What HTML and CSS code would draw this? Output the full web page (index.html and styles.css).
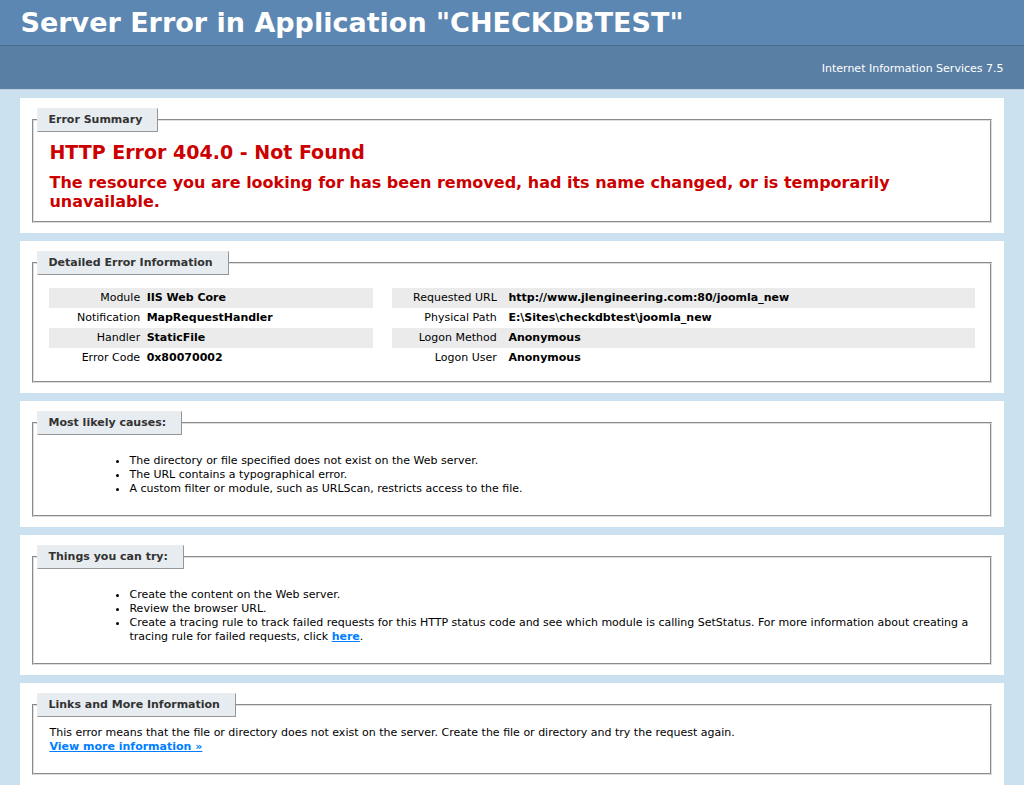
FILE: index.html
```html
<!DOCTYPE html>
<html>
<head>
<meta charset="utf-8">
<title>IIS 7.5 Detailed Error - 404.0 - Not Found</title>
<link rel="stylesheet" href="styles.css">
</head>
<body class="page">
<div class="header"><h1 class="title">Server Error in Application "CHECKDBTEST"</h1></div>
<div class="server-version"><p class="server-version-text">Internet Information Services 7.5</p></div>
<div class="content">
  <div class="content-container">
    <fieldset class="box"><legend class="box-legend">Error Summary</legend>
      <h2 class="err-title">HTTP Error 404.0 - Not Found</h2>
      <h3 class="err-sub">The resource you are looking for has been removed, had its name changed, or is temporarily unavailable.</h3>
    </fieldset>
  </div>
  <div class="content-container">
    <fieldset class="box"><legend class="box-legend">Detailed Error Information</legend>
      <div class="details-left">
        <table class="details" cellpadding="0" cellspacing="0">
          <tr class="alt"><th>Module</th><td>IIS Web Core</td></tr>
          <tr><th>Notification</th><td>MapRequestHandler</td></tr>
          <tr class="alt"><th>Handler</th><td>StaticFile</td></tr>
          <tr><th>Error Code</th><td>0x80070002</td></tr>
        </table>
      </div>
      <div class="details-right">
        <table class="details" cellpadding="0" cellspacing="0">
          <tr class="alt"><th>Requested URL</th><td>http://www.jlengineering.com:80/joomla_new</td></tr>
          <tr><th>Physical Path</th><td>E:\Sites\checkdbtest\joomla_new</td></tr>
          <tr class="alt"><th>Logon Method</th><td>Anonymous</td></tr>
          <tr><th>Logon User</th><td>Anonymous</td></tr>
        </table>
      </div>
      <div class="clear"></div>
    </fieldset>
  </div>
  <div class="content-container">
    <fieldset class="box"><legend class="box-legend">Most likely causes:</legend>
      <ul class="list">
        <li>The directory or file specified does not exist on the Web server.</li>
        <li>The URL contains a typographical error.</li>
        <li>A custom filter or module, such as URLScan, restricts access to the file.</li>
      </ul>
    </fieldset>
  </div>
  <div class="content-container">
    <fieldset class="box"><legend class="box-legend">Things you can try:</legend>
      <ul class="list">
        <li>Create the content on the Web server.</li>
        <li>Review the browser URL.</li>
        <li>Create a tracing rule to track failed requests for this HTTP status code and see which module is calling SetStatus. For more information about creating a tracing rule for failed requests, click <a class="link" href="#">here</a>. </li>
      </ul>
    </fieldset>
  </div>
  <div class="content-container">
    <fieldset class="box"><legend class="box-legend">Links and More Information</legend>
      This error means that the file or directory does not exist on the server. Create the file or directory and try the request again.
      <p class="para"><a class="link" href="#">View more information &raquo;</a></p>
    </fieldset>
  </div>
</div>
</body>
</html>
```

FILE: styles.css
```css
.page {
  margin: 0;
  font-size: 11px;
  line-height: 14px;
  font-family: "DejaVu Sans", Verdana, sans-serif;
  background: #CBE1EF;
}
.header {
  width: 96%;
  margin: 0;
  padding: 6px 2% 6px 2%;
  font-family: "DejaVu Sans", sans-serif;
  color: #FFF;
  background-color: #5C87B2;
}
.title {
  font-size: 27px;
  line-height: 33px;
  margin: 0;
  color: #FFF;
}
.server-version {
  width: 96%;
  min-height: 1px;
  margin: 0 0 5px 0;
  padding: 11px 2% 8px 2%;
  color: #FFF;
  background-color: #5A7FA5;
  border-bottom: 1px solid #C1CFDD;
  border-top: 1px solid #4A6C8E;
  font-weight: normal;
  font-size: 11px;
  text-align: right;
}
.server-version-text { margin: 5px 0; }
.content {
  margin: 0 0 0 2%;
  position: relative;
}
.content-container {
  background: #FFF;
  width: 96%;
  margin-top: 8px;
  padding: 10px;
  position: relative;
}
.box {
  margin: 0 2px;
  border: 2px groove #dedede;
  padding: 0 15px 9px 15px;
}
.box-legend {
  color: #333333;
  padding: 4px 15px 4px 10px;
  margin: 0 0 9px -12px;
  border-top: 1px solid #EDEDED;
  border-left: 1px solid #EDEDED;
  border-right: 1px solid #969696;
  border-bottom: 1px solid #969696;
  background: #E7ECF0;
  font-weight: bold;
  font-size: 11px;
  line-height: 14px;
}
.err-title {
  font-size: 19px;
  line-height: 22px;
  margin: 0;
  color: #CC0000;
}
.err-sub {
  font-size: 16px;
  line-height: 19px;
  margin: 10px 0 1px 0;
  color: #CC0000;
}
.list { margin: 10px 0 10px 40px; }
.para { margin: 0 0 10px 0; }
.link:link, .link:visited {
  color: #007EFF;
  font-weight: bold;
}
.details-left {
  width: 35%;
  float: left;
  margin-right: 2%;
}
.details-right {
  width: 63%;
  float: left;
  overflow: hidden;
}
.clear { clear: both; }
.details {
  margin: 4px 0 4px 0;
  width: 100%;
  border: none;
  border-collapse: separate;
  border-spacing: 0;
  font-size: 11px;
}
.details td, .details th {
  vertical-align: top;
  padding: 3px 0;
  text-align: left;
  font-weight: bold;
  border: none;
}
.details th {
  width: 30%;
  text-align: right;
  padding-right: 2%;
  font-weight: normal;
}
.details-right .details th { width: 20%; }
.details tr.alt td, .details tr.alt th { background-color: #ebebeb; }
```
